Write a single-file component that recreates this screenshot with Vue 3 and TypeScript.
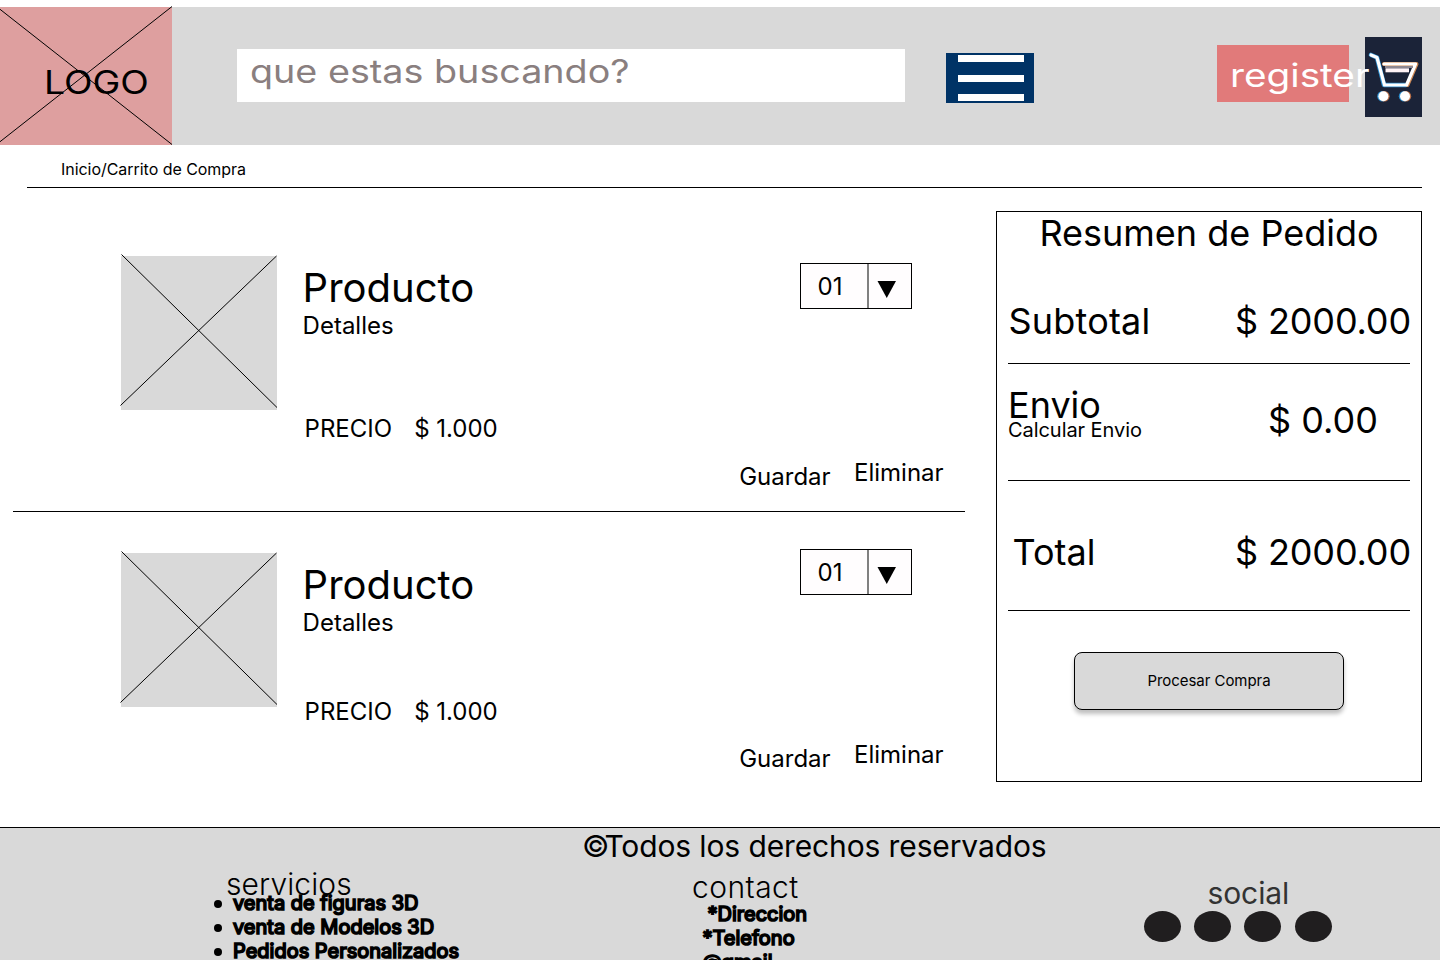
<script setup lang="ts">
interface Product {
  id: number
  name: string
  details: string
  price: string
  quantity: string
}

const products: Product[] = [
  { id: 1, name: 'Producto', details: 'Detalles', price: '$ 1.000', quantity: '01' },
  { id: 2, name: 'Producto', details: 'Detalles', price: '$ 1.000', quantity: '01' },
]

const services: string[] = ['venta de figuras 3D', 'venta de Modelos 3D', 'Pedidos Personalizados']
const contacts: string[] = ['*Direccion', '*Telefono', '@gmail']
</script>

<template>
  <div class="page">
    <header class="header">
      <div class="logo">
        <svg class="cross" width="172" height="139" viewBox="0 0 172 139">
          <path d="M-1 2.5 L172 138.5 M-1 136.5 L172 0.5" />
        </svg>
        <span class="logo-text">LOGO</span>
      </div>
      <div class="search"><span class="search-text">que estas buscando?</span></div>
      <div class="burger"><i></i><i></i><i></i></div>
      <div class="register"><span class="register-text">register</span></div>
      <div class="cart">
        <svg width="57" height="80" viewBox="0 0 57 80">
          <g fill="none" stroke-linecap="round" stroke-linejoin="round">
            <path d="M6 18 L12 20.5 L19 48 H41" stroke="#2c8fd0" stroke-width="4.6" />
            <path d="M19 27 H51.5 L42.5 48" stroke="#d08a55" stroke-width="4" />
            <path d="M6 18 L12 20.5 L19.5 48 H41.5 L50.5 27 H19" stroke="#fff" stroke-width="3.2" />
            <path d="M20 30 H48" stroke="#8e8790" stroke-width="2" stroke-linecap="butt" />
            <path d="M20.5 33.3 H44" stroke="#fff3f6" stroke-width="4" stroke-linecap="butt" />
          </g>
          <circle cx="17.4" cy="59.3" r="5.2" fill="#2c8fd0" />
          <circle cx="19.4" cy="59.3" r="5.2" fill="#b9704a" />
          <circle cx="18.4" cy="59.3" r="5" fill="#fff" />
          <circle cx="39" cy="59.3" r="5.2" fill="#2c8fd0" />
          <circle cx="41" cy="59.3" r="5.2" fill="#b9704a" />
          <circle cx="40" cy="59.3" r="5" fill="#fff" />
        </svg>
      </div>
    </header>

    <nav class="breadcrumb">Inicio/Carrito de Compra</nav>

    <main class="content">
      <section class="products">
        <article v-for="p in products" :key="p.id" class="product">
          <div class="thumb">
            <svg class="cross" width="158" height="156" viewBox="0 0 158 156">
              <path d="M1.5 0.5 L157 153.5 M0.5 151.5 L156.5 2" />
            </svg>
          </div>
          <div class="info">
            <h2>{{ p.name }}</h2>
            <p class="details">{{ p.details }}</p>
            <p class="price"><span>PRECIO</span><span>{{ p.price }}</span></p>
          </div>
          <div class="side">
            <div class="quantity">
              <span class="count">{{ p.quantity }}</span>
              <span class="toggle">
                <svg width="19" height="17" viewBox="0 0 19 17"><path d="M0.5 0 H19 L9.75 17 Z" /></svg>
              </span>
            </div>
            <div class="actions"><span class="save">Guardar</span><span>Eliminar</span></div>
          </div>
        </article>
      </section>

      <aside class="summary">
        <h3>Resumen de Pedido</h3>
        <div class="row subtotal"><span class="label">Subtotal</span><span class="amount">$ 2000.00</span></div>
        <div class="row shipping">
          <div>
            <div class="ship-title">Envio</div>
            <div class="ship-note">Calcular Envio</div>
          </div>
          <span class="ship-price">$ 0.00</span>
        </div>
        <div class="row total"><span>Total</span><span class="amount">$ 2000.00</span></div>
        <button class="checkout" type="button">Procesar Compra</button>
      </aside>
    </main>

    <footer class="footer">
      <p class="rights"><span class="copy">©</span>Todos los derechos reservados</p>
      <div class="columns">
        <div class="services">
          <h4>servicios</h4>
          <ul><li v-for="s in services" :key="s">{{ s }}</li></ul>
        </div>
        <div class="contact">
          <h4>contact</h4>
          <p v-for="c in contacts" :key="c">{{ c }}</p>
        </div>
        <div class="social">
          <h4>social</h4>
          <div class="dots"><i v-for="n in 4" :key="n"></i></div>
        </div>
      </div>
    </footer>
  </div>
</template>

<style>
body {
  margin: 0;
  background: #fff;
}
</style>

<style scoped>
.page {
  box-sizing: border-box;
  width: 1440px;
  height: 960px;
  padding-top: 7px;
  overflow: hidden;
  font-family: Inter, 'Liberation Sans', sans-serif;
  color: #000;
}
h2, h3, h4, p, ul {
  margin: 0;
  padding: 0;
  font-weight: 400;
}
.cross {
  position: absolute;
  fill: none;
  stroke: #000;
  stroke-width: 1;
}

/* Header */
.header {
  display: flex;
  align-items: flex-start;
  height: 138px;
  background: #d9d9d9;
}
.logo {
  position: relative;
  box-sizing: border-box;
  width: 172px;
  height: 138px;
  padding: 57px 0 0 44px;
  background: #de9f9f;
}
.logo .cross {
  left: 0;
  top: -1px;
}
.logo-text,
.search-text,
.register-text {
  display: inline-block;
  font-size: 32px;
  line-height: 38px;
  white-space: nowrap;
  transform-origin: left center;
}
.logo-text {
  transform: scaleX(1.165);
}
.search {
  box-sizing: border-box;
  width: 668px;
  height: 53px;
  margin: 42px 0 0 65px;
  padding: 4px 0 0 13px;
  background: #fff;
  color: #8a7f7f;
}
.search-text {
  transform: scaleX(1.178);
}
.burger {
  display: flex;
  box-sizing: border-box;
  flex-direction: column;
  justify-content: space-between;
  width: 88px;
  height: 50px;
  margin: 46px 0 0 41px;
  padding: 2px 10px 2px 12px;
  background: #003366;
}
.burger i {
  height: 7px;
  background: #fff;
}
.register {
  position: relative;
  z-index: 1;
  box-sizing: border-box;
  width: 132px;
  height: 57px;
  margin: 38px 0 0 183px;
  padding: 12px 0 0 13px;
  background: #e17a7a;
  color: #fff;
}
.register-text {
  transform: scaleX(1.21);
}
.cart {
  width: 57px;
  height: 80px;
  margin: 29.5px 0 0 15.5px;
  background: #1b2338;
}
.cart svg {
  display: block;
}

/* Breadcrumb */
.breadcrumb {
  box-sizing: border-box;
  height: 43px;
  margin: 0 18px 0 27px;
  padding: 14px 0 0 34px;
  border-bottom: 1px solid #000;
  font-size: 16px;
  line-height: 20px;
  letter-spacing: -0.04px;
}

/* Product list */
.content {
  display: flex;
  height: 639px;
}
.products {
  width: 952px;
  margin-left: 13px;
}
.product {
  display: flex;
  box-sizing: border-box;
  height: 324px;
  padding-left: 108px;
}
.product:first-child {
  border-bottom: 1px solid #000;
}
.thumb {
  position: relative;
  width: 156px;
  height: 154px;
  margin-top: 68px;
  background: #d9d9d9;
}
.thumb .cross {
  left: -1px;
  top: -2.5px;
}
.info {
  width: 437px;
  padding: 75.5px 0 0 25.6px;
  box-sizing: border-box;
}
.info h2 {
  font-size: 40px;
  line-height: 48px;
}
.details,
.price,
.actions {
  font-size: 24px;
  line-height: 29px;
}
.details {
  margin-top: -1px;
}
.price {
  display: flex;
  gap: 22px;
  margin: 74px 0 0 2px;
}
.side {
  width: 225px;
  padding-top: 75px;
}
.quantity {
  display: flex;
  box-sizing: border-box;
  width: 112px;
  height: 46px;
  margin-left: 86px;
  border: 1px solid #000;
  background: #fffdfe;
}
.count {
  box-sizing: border-box;
  width: 68px;
  padding: 8px 0 0 16.5px;
  border-right: 2px solid #808080;
  font-size: 24px;
  line-height: 29px;
}
.toggle {
  display: block;
  padding: 16.5px 0 0 8px;
}
.toggle svg {
  display: block;
}
.actions {
  display: flex;
  gap: 23.4px;
  margin: 149px 0 0 25.2px;
}
.save {
  margin-top: 4px;
}
.product:last-child .thumb {
  margin-top: 41px;
}
.product:last-child .info {
  padding-top: 48.5px;
}
.product:last-child .price {
  margin-top: 60px;
}
.product:last-child .side {
  padding-top: 37px;
}
.product:last-child .actions {
  margin-top: 145px;
}

/* Order summary */
.summary {
  display: flex;
  box-sizing: border-box;
  flex-direction: column;
  width: 426px;
  height: 571px;
  margin: 23px 0 0 31px;
  padding: 0 11px;
  border: 1px solid #000;
  font-size: 36px;
  line-height: 44px;
}
.summary h3 {
  height: 44px;
  font-size: 36px;
  line-height: 42px;
  text-align: center;
}
.row {
  display: flex;
  box-sizing: border-box;
  justify-content: space-between;
  border-bottom: 1px solid #000;
  white-space: nowrap;
}
.label {
  margin-left: 0.5px;
  letter-spacing: 0.2px;
}
.amount {
  margin-right: -1px;
  letter-spacing: -0.15px;
}
.subtotal {
  height: 108px;
  padding-top: 43px;
}
.shipping {
  height: 117px;
  padding-top: 19px;
}
.ship-note {
  margin-top: -9px;
  font-size: 20px;
  line-height: 24px;
  letter-spacing: -0.06px;
}
.ship-price {
  margin: 15px 32px 0 0;
}
.total {
  height: 130px;
  padding: 49px 0 0 4.5px;
}
.checkout {
  align-self: center;
  width: 270px;
  height: 58px;
  margin-top: 41px;
  padding: 0;
  border: 1px solid #000;
  border-radius: 8px;
  background: #d9d9d9;
  box-shadow: 0 4px 4px rgba(0, 0, 0, 0.25);
  color: #000;
  font: 15px/18px Inter, 'Liberation Sans', sans-serif;
  letter-spacing: -0.05px;
}

/* Footer */
.footer {
  height: 260px;
  border-top: 1px solid #000;
  background: #d9d9d9;
}
.rights {
  height: 36px;
  padding-left: 582px;
  font-size: 30px;
  line-height: 36px;
  white-space: nowrap;
  letter-spacing: -0.12px;
}
.copy {
  letter-spacing: -5px;
}
.columns {
  display: flex;
}
.services {
  width: 466px;
  padding: 2px 0 0 226px;
}
.contact {
  width: 452px;
  padding-top: 5px;
}
.social {
  padding-top: 11px;
}
h4 {
  font-size: 30px;
  line-height: 36px;
  font-weight: 300;
}
.services h4 {
  letter-spacing: 0.1px;
}
.contact h4 {
  letter-spacing: 0.45px;
}
.services ul {
  margin-top: -11px;
  padding-left: 7px;
}
.services li,
.contact p {
  font-size: 20px;
  line-height: 24px;
  -webkit-text-stroke: 1.7px #000;
}
.services li {
  list-style: none;
}
.services li::before {
  display: inline-block;
  width: 8px;
  height: 8px;
  margin: 0 11px 2px -19px;
  border-radius: 50%;
  background: #000;
  content: '';
}
.contact p {
  padding-left: 10.5px;
}
.contact p:first-of-type {
  margin-top: -3px;
  padding-left: 15.5px;
}
.social h4 {
  margin-left: 63.5px;
  color: #333;
  font-weight: 400;
  letter-spacing: -0.1px;
}
.dots {
  display: flex;
  gap: 13.2px;
}
.dots i {
  width: 37px;
  height: 31px;
  border-radius: 50%;
  background: #201e1f;
}
</style>
